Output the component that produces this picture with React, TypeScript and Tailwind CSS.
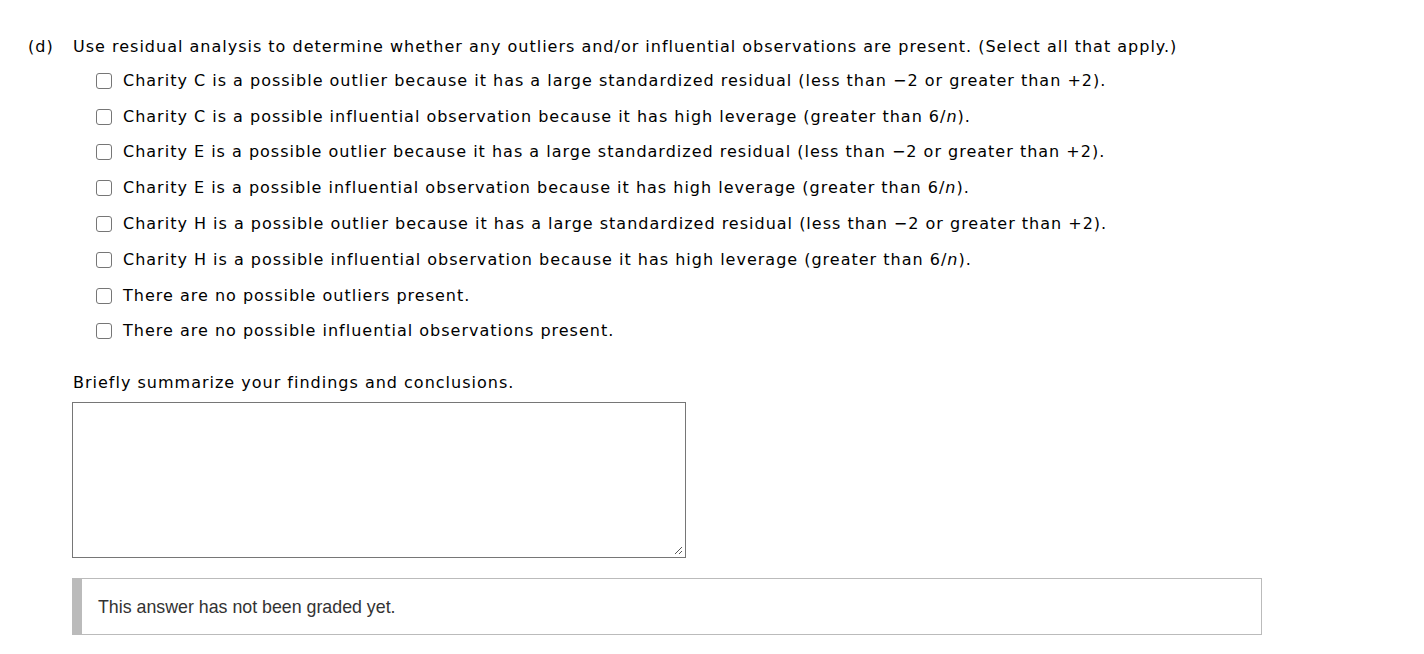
import React from 'react';

const options: { text: React.ReactNode }[] = [
  { text: <>Charity C is a possible outlier because it has a large standardized residual (less than &minus;2 or greater than +2).</> },
  { text: <>Charity C is a possible influential observation because it has high leverage (greater than 6/<i>n</i>).</> },
  { text: <>Charity E is a possible outlier because it has a large standardized residual (less than &minus;2 or greater than +2).</> },
  { text: <>Charity E is a possible influential observation because it has high leverage (greater than 6/<i>n</i>).</> },
  { text: <>Charity H is a possible outlier because it has a large standardized residual (less than &minus;2 or greater than +2).</> },
  { text: <>Charity H is a possible influential observation because it has high leverage (greater than 6/<i>n</i>).</> },
  { text: <>There are no possible outliers present.</> },
  { text: <>There are no possible influential observations present.</> },
];

export default function App() {
  return (
    <div className="min-h-[654px] bg-white text-black font-['Verdana','DejaVu_Sans',sans-serif] text-[16px] tracking-[1px]">
      <div className="pl-[28px] pt-[36px]">
        <div className="flex h-[22px] items-center">
          <span className="w-[45px]">(d)</span>
          <span>Use residual analysis to determine whether any outliers and/or influential observations are present. (Select all that apply.)</span>
        </div>
        <div className="pl-[68px] pt-[5px]">
          {options.map((o, i) => (
            <label key={i} className="flex h-[35.8px] items-center">
              <span className="mr-[11px] inline-block h-[16px] w-[16px] rounded-[3px] border border-[#767676] bg-white" />
              <span>{o.text}</span>
            </label>
          ))}
        </div>
        <div className="pl-[45px] pt-[23px]">
          <div className="h-[22px] leading-[22px]">Briefly summarize your findings and conclusions.</div>
          <div className="relative -ml-px mt-[8px] h-[156px] w-[614px] border border-[#767676]">
            <svg className="absolute bottom-[2px] right-[2px]" width="10" height="10" viewBox="0 0 10 10">
              <path d="M9 2 L2 9 M9 6 L6 9" stroke="#555" strokeWidth="1" />
            </svg>
          </div>
          <div className="-ml-px mt-[20px] flex h-[57px] w-[1190px] border border-[#bbbbbb] border-l-[10px] border-l-[#bbbbbb]">
            <div className="flex items-center pl-[16px] font-['Arial','Liberation_Sans',sans-serif] text-[17.8px] tracking-normal text-[#333333]">
              This answer has not been graded yet.
            </div>
          </div>
        </div>
      </div>
    </div>
  );
}
